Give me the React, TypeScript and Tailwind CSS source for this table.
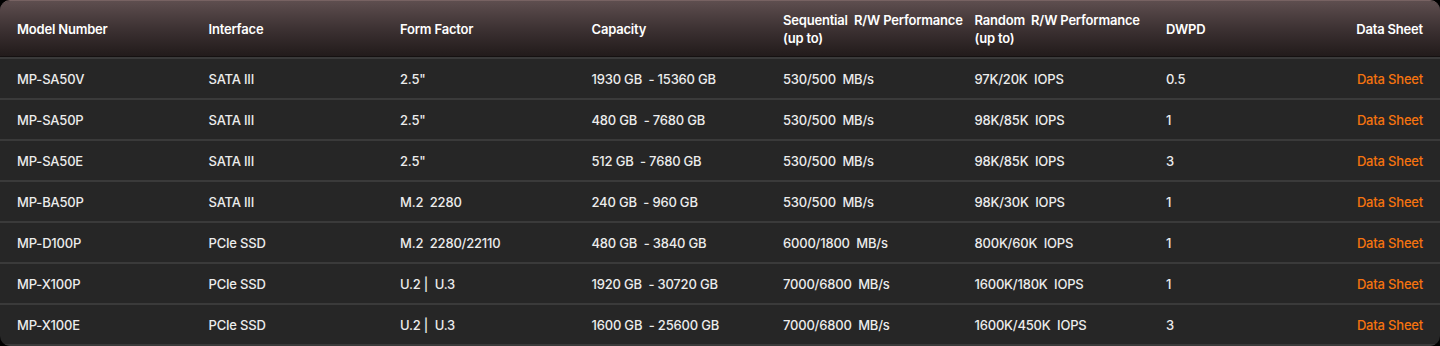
const headers = [
  'Model Number',
  'Interface',
  'Form Factor',
  'Capacity',
  'Sequential  R/W Performance\n(up to)',
  'Random  R/W Performance\n(up to)',
  'DWPD',
]

const rows = [
  ['MP-SA50V', 'SATA III', '2.5"', '1930 GB  - 15360 GB', '530/500  MB/s', '97K/20K  IOPS', '0.5'],
  ['MP-SA50P', 'SATA III', '2.5"', '480 GB  - 7680 GB', '530/500  MB/s', '98K/85K  IOPS', '1'],
  ['MP-SA50E', 'SATA III', '2.5"', '512 GB  - 7680 GB', '530/500  MB/s', '98K/85K  IOPS', '3'],
  ['MP-BA50P', 'SATA III', 'M.2  2280', '240 GB  - 960 GB', '530/500  MB/s', '98K/30K  IOPS', '1'],
  ['MP-D100P', 'PCIe SSD', 'M.2  2280/22110', '480 GB  - 3840 GB', '6000/1800  MB/s', '800K/60K  IOPS', '1'],
  ['MP-X100P', 'PCIe SSD', 'U.2 |  U.3', '1920 GB  - 30720 GB', '7000/6800  MB/s', '1600K/180K  IOPS', '1'],
  ['MP-X100E', 'PCIe SSD', 'U.2 |  U.3', '1600 GB  - 25600 GB', '7000/6800  MB/s', '1600K/450K  IOPS', '3'],
]

const grid = 'grid grid-cols-[repeat(7,191.5px)_1fr]'

export default function App() {
  return (
    <div className="w-[1440px] h-[346px] bg-black font-['Inter',sans-serif] text-[13px] tracking-[-0.015em]">
      <div className="rounded-[10px] overflow-hidden bg-[#262626] border-t border-[#9a7c7c]/70">
        {/* Header */}
        <div className={`${grid} h-[56px] items-center bg-gradient-to-b from-[#5e4e4f] via-[#3d3233] to-[#221b1b] border-b border-[#151111] font-semibold text-white leading-[18px]`}>
          {headers.map((h) => (
            <div key={h} className="pl-[17px] whitespace-pre">
              {h}
            </div>
          ))}
          <div className="pr-[17px] text-right">Data Sheet</div>
        </div>

        {/* Rows */}
        {rows.map((r) => (
          <div
            key={r[0]}
            className={`${grid} h-[41px] items-center pt-[2px] border-t-2 border-[#3a3a3a] font-medium text-[#ececec] first:border-t`}
          >
            {r.map((c, i) => (
              <div key={i} className="pl-[17px] whitespace-pre">
                {c}
              </div>
            ))}
            <a href="#" className="pr-[17px] text-right text-[#f5730f]">
              Data Sheet
            </a>
          </div>
        ))}
        <div className="h-[2px] bg-[#3a3a3a]" />
      </div>
    </div>
  )
}
